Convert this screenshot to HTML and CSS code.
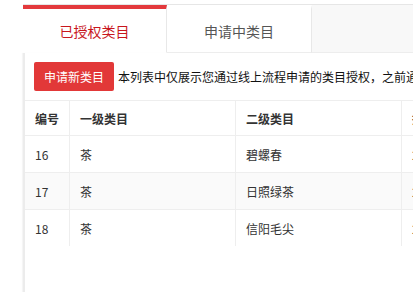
FILE: index.html
```html
<!DOCTYPE html>
<html lang="zh-CN">
<head>
<meta charset="utf-8">
<title>类目授权</title>
<link rel="stylesheet" href="styles.css">
</head>
<body>
<div class="page">
  <div class="tabs">
    <div class="tab active">已授权类目</div>
    <div class="tab">申请中类目</div>
    <div class="tab-fill"></div>
  </div>
  <div class="card">
    <div class="toolbar">
      <button class="btn-apply">申请新类目</button>
      <span class="notice">本列表中仅展示您通过线上流程申请的类目授权，之前通过线下方式申请的类目授权请联系客服查询</span>
    </div>
    <table class="grid">
      <thead>
        <tr>
          <th class="c-id">编号</th>
          <th class="c-wide">一级类目</th>
          <th class="c-wide">二级类目</th>
          <th class="c-wide">授权时间</th>
          <th class="c-wide">状态</th>
        </tr>
      </thead>
      <tbody>
        <tr>
          <td>16</td>
          <td>茶</td>
          <td>碧螺春</td>
          <td>2017-05-12</td>
          <td>已授权</td>
        </tr>
        <tr class="alt">
          <td>17</td>
          <td>茶</td>
          <td>日照绿茶</td>
          <td>2017-05-12</td>
          <td>已授权</td>
        </tr>
        <tr>
          <td>18</td>
          <td>茶</td>
          <td>信阳毛尖</td>
          <td>2017-05-12</td>
          <td>已授权</td>
        </tr>
      </tbody>
    </table>
  </div>
</div>
</body>
</html>
```

FILE: styles.css
```css
html, body {
  margin: 0;
  padding: 0;
  background: #fff;
  overflow: hidden;
}

body {
  font-family: "Noto Sans CJK SC", "Liberation Sans", sans-serif;
  color: #333;
  font-size: 12px;
}

.page {
  margin: 4px 0 0 23px;
  display: flex;
  flex-direction: column;
  height: calc(100vh - 4px);
}

.tabs {
  display: flex;
  border-top: 1px solid #e6e6e6;
  border-bottom: 1px solid #ececec;
  height: 49px;
  box-sizing: border-box;
}

.tab {
  width: 145px;
  box-sizing: border-box;
  height: 48px;
  border-top: 4px solid transparent;
  border-right: 1px solid #e8e8e8;
  border-bottom: 1px solid #eeeeee;
  background: #fff;
  display: flex;
  align-items: center;
  justify-content: center;
  font-size: 14px;
  color: #555;
}

.tab.active {
  width: 144px;
  border-top-color: #e3393c;
  border-bottom-color: transparent;
  color: #c8161d;
}

.tab-fill {
  flex: 1;
  height: 48px;
  box-sizing: border-box;
  background: #f8f8f8;
  border-bottom: 1px solid #eeeeee;
}

.card {
  flex: 1;
  border-left: 2px solid #ececec;
  box-shadow: -1px 0 1px rgba(0, 0, 0, 0.04);
  overflow: hidden;
  background: #fff;
}

.toolbar {
  display: flex;
  align-items: center;
  gap: 4px;
  padding: 9px 9px 9px 9px;
  white-space: nowrap;
}

.btn-apply {
  flex: none;
  height: 29px;
  width: 80px;
  padding: 0;
  border: 0;
  border-radius: 2px;
  background: #e23838;
  color: #fff;
  font-family: inherit;
  font-size: 12px;
}

.notice {
  color: #111;
  font-size: 12px;
}

.grid {
  border-collapse: separate;
  border-spacing: 0;
  table-layout: fixed;
  width: 709px;
  border-top: 1px solid #eeeeee;
}

.grid th,
.grid td {
  box-sizing: border-box;
  text-align: left;
  padding: 0 10px;
  border-right: 1px solid #eeeeee;
  border-bottom: 1px solid #eeeeee;
  white-space: nowrap;
  overflow: hidden;
}

.grid th {
  height: 35px;
  font-weight: 700;
  color: #333;
}

.grid td {
  height: 37px;
  color: #333;
}

.grid tbody tr:last-child td {
  border-bottom: 0;
  height: 36px;
}

.grid .c-id {
  width: 45px;
}

.grid .c-wide {
  width: 166px;
}

.grid tr.alt td {
  background: #fafafa;
}
```
